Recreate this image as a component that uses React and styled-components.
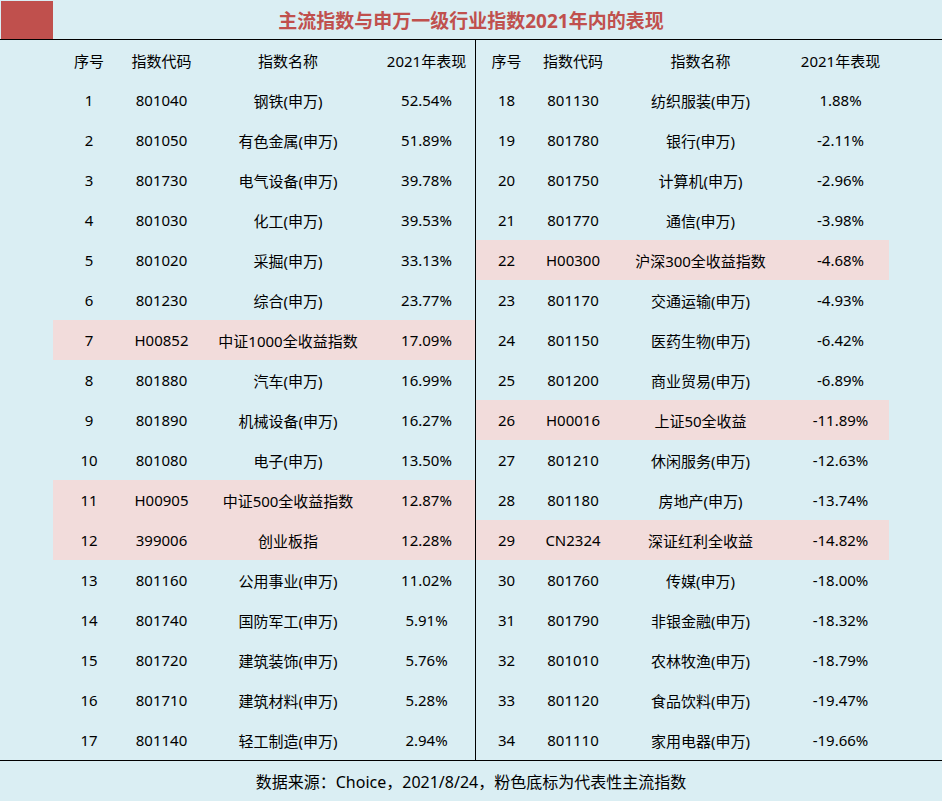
import React from "react";
import styled, { createGlobalStyle } from "styled-components";

const GlobalStyle = createGlobalStyle`
    html, body {
        margin: 0;
        padding: 0;
        background: #daeef3;
    }
    body {
        font-family: "Noto Sans", "Noto Sans CJK SC", sans-serif;
        color: #000;
    }
`;

const leftRows = [
    ["1", "801040", "钢铁(申万)", "52.54%"],
    ["2", "801050", "有色金属(申万)", "51.89%"],
    ["3", "801730", "电气设备(申万)", "39.78%"],
    ["4", "801030", "化工(申万)", "39.53%"],
    ["5", "801020", "采掘(申万)", "33.13%"],
    ["6", "801230", "综合(申万)", "23.77%"],
    ["7", "H00852", "中证1000全收益指数", "17.09%", true],
    ["8", "801880", "汽车(申万)", "16.99%"],
    ["9", "801890", "机械设备(申万)", "16.27%"],
    ["10", "801080", "电子(申万)", "13.50%"],
    ["11", "H00905", "中证500全收益指数", "12.87%", true],
    ["12", "399006", "创业板指", "12.28%", true],
    ["13", "801160", "公用事业(申万)", "11.02%"],
    ["14", "801740", "国防军工(申万)", "5.91%"],
    ["15", "801720", "建筑装饰(申万)", "5.76%"],
    ["16", "801710", "建筑材料(申万)", "5.28%"],
    ["17", "801140", "轻工制造(申万)", "2.94%"],
];

const rightRows = [
    ["18", "801130", "纺织服装(申万)", "1.88%"],
    ["19", "801780", "银行(申万)", "-2.11%"],
    ["20", "801750", "计算机(申万)", "-2.96%"],
    ["21", "801770", "通信(申万)", "-3.98%"],
    ["22", "H00300", "沪深300全收益指数", "-4.68%", true],
    ["23", "801170", "交通运输(申万)", "-4.93%"],
    ["24", "801150", "医药生物(申万)", "-6.42%"],
    ["25", "801200", "商业贸易(申万)", "-6.89%"],
    ["26", "H00016", "上证50全收益", "-11.89%", true],
    ["27", "801210", "休闲服务(申万)", "-12.63%"],
    ["28", "801180", "房地产(申万)", "-13.74%"],
    ["29", "CN2324", "深证红利全收益", "-14.82%", true],
    ["30", "801760", "传媒(申万)", "-18.00%"],
    ["31", "801790", "非银金融(申万)", "-18.32%"],
    ["32", "801010", "农林牧渔(申万)", "-18.79%"],
    ["33", "801120", "食品饮料(申万)", "-19.47%"],
    ["34", "801110", "家用电器(申万)", "-19.66%"],
];

const headers = ["序号", "指数代码", "指数名称", "2021年表现"];

const Page = styled.div`
    width: 942px;
    height: 801px;
    background: #daeef3;
    display: flex;
    flex-direction: column;
    overflow: hidden;
`;

const TitleBar = styled.div`
    height: 40px;
    display: grid;
    grid-template-columns: 53px 1fr 53px;
    align-items: stretch;
    border-bottom: 1px solid #000;
    box-sizing: border-box;
`;

const RedBlock = styled.div`
    background: #c0504d;
    margin: 1px 0 0 1px;
`;

const Title = styled.h1`
    margin: 0;
    font-size: 19px;
    font-weight: 700;
    color: #c0504d;
    display: flex;
    align-items: center;
    justify-content: center;
`;

const Body = styled.div`
    display: flex;
    padding: 0 53px;
    height: 720px;
`;

const Table = styled.div`
    width: ${p => p.width}px;
    display: grid;
    grid-template-columns: ${p => p.columns};
    grid-auto-rows: 40px;
    border-right: ${p => (p.divider ? "1px solid #000" : "none")};
`;

const Row = styled.div`
    display: contents;

    & > div {
        background: ${p => (p.highlight ? "#f2dcdb" : "transparent")};
    }
`;

const Cell = styled.div`
    display: flex;
    align-items: center;
    justify-content: center;
    font-size: 15px;
    white-space: nowrap;
`;

const Footer = styled.div`
    border-top: 1px solid #000;
    flex: 1;
    display: flex;
    align-items: center;
    justify-content: center;
    font-size: 16px;
`;

const DataTable = ({ rows, width, columns, divider }) => (
    <Table width={width} columns={columns} divider={divider}>
        <Row>
            {headers.map(h => (
                <Cell key={h}>{h}</Cell>
            ))}
        </Row>
        {rows.map(([no, code, name, perf, highlight]) => (
            <Row key={no} highlight={highlight}>
                <Cell>{no}</Cell>
                <Cell>{code}</Cell>
                <Cell>{name}</Cell>
                <Cell>{perf}</Cell>
            </Row>
        ))}
    </Table>
);

export default function App() {
    return (
        <>
            <GlobalStyle />
            <Page>
                <TitleBar>
                    <RedBlock />
                    <Title>主流指数与申万一级行业指数2021年内的表现</Title>
                    <div />
                </TitleBar>
                <Body>
                    <DataTable rows={leftRows} width={423} columns="72px 73px 180px 97px" divider />
                    <DataTable rows={rightRows} width={413} columns="61px 72px 183px 97px" />
                </Body>
                <Footer>数据来源：Choice，2021/8/24，粉色底标为代表性主流指数</Footer>
            </Page>
        </>
    );
}
